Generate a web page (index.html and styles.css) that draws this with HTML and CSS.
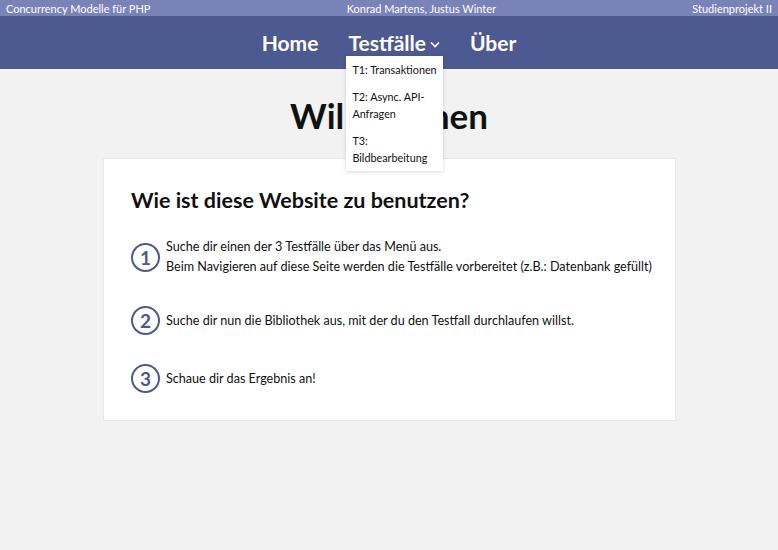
FILE: index.html
```html
<!DOCTYPE html>
<html lang="de">
<head>
    <meta charset="UTF-8">
    <meta name="viewport" content="width=device-width, initial-scale=1.0">
    <title>Concurrency Modelle für PHP</title>
    <link rel="stylesheet" href="styles.css">
</head>
<body>
    <div class="topbar">
        <span>Concurrency Modelle für PHP</span>
        <span>Konrad Martens, Justus Winter</span>
        <span>Studienprojekt II</span>
    </div>
    <nav class="nav">
        <a href="#">Home</a>
        <div class="nav-drop">
            <a href="#">Testfälle<svg class="chev" width="10" height="7" viewBox="0 0 10 7"><path d="M1 1.5 L5 5.5 L9 1.5" fill="none" stroke="#fff" stroke-width="1.6"/></svg></a>
            <ul class="dropdown">
                <li>T1: Transaktionen</li>
                <li>T2: Async. API-Anfragen</li>
                <li>T3: Bildbearbeitung</li>
            </ul>
        </div>
        <a href="#">Über</a>
    </nav>
    <main class="main">
        <h1>Willkommen</h1>
        <section class="card">
            <h2>Wie ist diese Website zu benutzen?</h2>
            <div class="steps">
                <div class="step">
                    <span class="num">1</span>
                    <p>Suche dir einen der 3 Testfälle über das Menü aus.<br>Beim Navigieren auf diese Seite werden die Testfälle vorbereitet (z.B.: Datenbank gefüllt)</p>
                </div>
                <div class="step">
                    <span class="num">2</span>
                    <p>Suche dir nun die Bibliothek aus, mit der du den Testfall durchlaufen willst.</p>
                </div>
                <div class="step">
                    <span class="num">3</span>
                    <p>Schaue dir das Ergebnis an!</p>
                </div>
            </div>
        </section>
    </main>
</body>
</html>
```
FILE: styles.css
```css
body {
    font-family: Lato, "Open Sans", sans-serif;
    background-color: #f2f2f2;
    margin: 0;
    color: #111;
}

.topbar {
    display: flex;
    justify-content: space-between;
    align-items: center;
    height: 16px;
    padding: 0 6px;
    background-color: #7a83b8;
    color: #fff;
    font-size: 11px;
}

.nav {
    display: flex;
    justify-content: center;
    align-items: center;
    gap: 30px;
    height: 53px;
    background-color: #4d5991;
}

.nav a {
    color: #fff;
    text-decoration: none;
    font-weight: 700;
    font-size: 21px;
}

.nav-drop {
    position: relative;
}

.chev {
    margin-left: 4px;
    vertical-align: 3px;
}

.dropdown {
    position: absolute;
    top: 26px;
    left: -2px;
    width: 97px;
    margin: 0;
    padding: 0;
    list-style: none;
    background: #fff;
    box-shadow: 0 1px 4px rgba(0, 0, 0, 0.15);
    z-index: 5;
}

.dropdown li {
    padding: 5px 5px 5px 6px;
    font-size: 10.8px;
    line-height: 17px;
}

.main h1 {
    margin: 26px 0 0;
    text-align: center;
    font-size: 35px;
    line-height: 40px;
}

.card {
    margin: 23px 102px 0 103px;
    padding: 25px 16px 27px 27px;
    background: #fff;
    border: 1px solid #e8e8e8;
}

.card h2 {
    margin: 0 0 21px;
    font-size: 21.5px;
    line-height: 32px;
}

.steps {
    display: flex;
    flex-direction: column;
    gap: 29px;
}

.step {
    display: flex;
    align-items: center;
    gap: 6px;
}

.num {
    display: flex;
    align-items: center;
    justify-content: center;
    box-sizing: border-box;
    width: 29px;
    height: 29px;
    flex-shrink: 0;
    border: 2.5px solid #4d5991;
    border-radius: 50%;
    color: #4d5991;
    font-weight: 700;
    font-size: 19px;
}

.step p {
    margin: 0;
    font-size: 12.6px;
    line-height: 20px;
}
```
